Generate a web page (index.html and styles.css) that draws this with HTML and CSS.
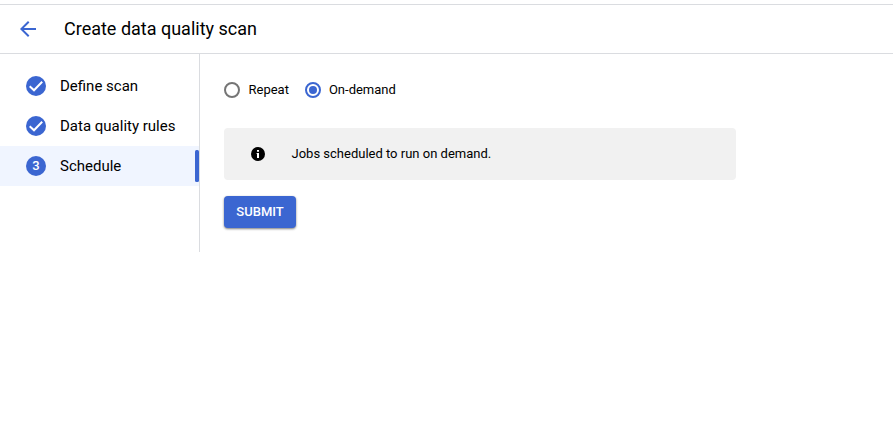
FILE: index.html
```html
<!DOCTYPE html>
<html lang="en">
<head>
<meta charset="utf-8">
<title>Create data quality scan</title>
<link rel="stylesheet" href="styles.css">
</head>
<body>
<header class="header">
  <svg class="back" viewBox="0 0 24 24"><path d="M20 11H7.83l5.59-5.59L12 4l-8 8 8 8 1.41-1.41L7.83 13H20z"/></svg>
  <h1 class="title">Create data quality scan</h1>
</header>
<div class="layout">
  <nav class="steps">
    <div class="step"><svg class="check" viewBox="0 0 20 20"><circle cx="10" cy="10" r="10"/><path d="M3.7 10.2l4.3 4.1 8.2-8.5"/></svg>Define scan</div>
    <div class="step"><svg class="check" viewBox="0 0 20 20"><circle cx="10" cy="10" r="10"/><path d="M3.7 10.2l4.3 4.1 8.2-8.5"/></svg>Data quality rules</div>
    <div class="step active"><span class="num">3</span>Schedule<span class="marker"></span></div>
  </nav>
  <main class="content">
    <div class="radios">
      <label class="radio"><span class="dot"></span><span class="text">Repeat</span></label>
      <label class="radio selected"><span class="dot on"></span><span class="text">On-demand</span></label>
    </div>
    <div class="info">
      <svg class="info-icon" viewBox="0 0 14 14"><circle cx="7" cy="7" r="7"/><path d="M6 3h2v1.8H6zM5.6 6H8v5H6V7h-.4z"/></svg>
      <span class="text">Jobs scheduled to run on demand.</span>
    </div>
    <button class="submit">SUBMIT</button>
  </main>
</div>
</body>
</html>
```
FILE: styles.css
```css
* { box-sizing: border-box; }
body { margin: 0; padding-top: 4px; background: #fff; color: #000; font-family: Roboto, sans-serif; }
.header { height: 50px; border-top: 1px solid #dadce0; border-bottom: 1px solid #dadce0; display: flex; align-items: center; padding-left: 16px; }
.back { width: 24px; height: 24px; fill: #3b66d1; margin-right: 24px; }
.title { margin: 0; font-size: 18px; font-weight: 400; line-height: 24px; }
.layout { display: flex; height: 198px; }
.steps { width: 200px; border-right: 1px solid #dadce0; padding-top: 12px; }
.step { height: 40px; display: flex; align-items: center; gap: 14px; padding-left: 26px; font-size: 15px; }
.active { background: #f0f5ff; }
.marker { width: 4px; height: 32px; border-radius: 1.5px; background: #3b66d1; margin-left: auto; }
.check { width: 20px; height: 20px; }
.check circle { fill: #3b66d1; }
.check path { fill: none; stroke: #fff; stroke-width: 2; }
.num { width: 20px; height: 20px; border-radius: 50%; background: #3b66d1; color: #fff; font-size: 13px; font-weight: 500; line-height: 20px; text-align: center; }
.content { padding: 28px 0 0 24px; }
.radios { display: flex; gap: 16.5px; height: 16px; font-size: 13px; }
.radio { display: flex; align-items: center; gap: 8.5px; }
.selected { gap: 7.5px; }
.text { line-height: 16px; }
.dot { width: 16px; height: 16px; border: 2px solid #757575; border-radius: 50%; }
.on { border-color: #3b66d1; background: #3b66d1; background-clip: content-box; padding: 2px; }
.info { margin-top: 30px; width: 512px; height: 52px; border-radius: 4px; background: #f1f1f1; display: flex; align-items: center; gap: 26.5px; padding-left: 27px; font-size: 13px; }
.info-icon { width: 14px; height: 14px; }
.info-icon path { fill: #fff; }
.submit { display: block; margin-top: 16px; width: 72px; height: 32px; padding: 0 0 2px; border: 0; border-radius: 4px; background: #3b66d1; color: #fff; font: 500 13px Roboto, sans-serif; box-shadow: 0 1px 2px rgba(0,0,0,.35), 0 1px 3px rgba(0,0,0,.2); }
```
